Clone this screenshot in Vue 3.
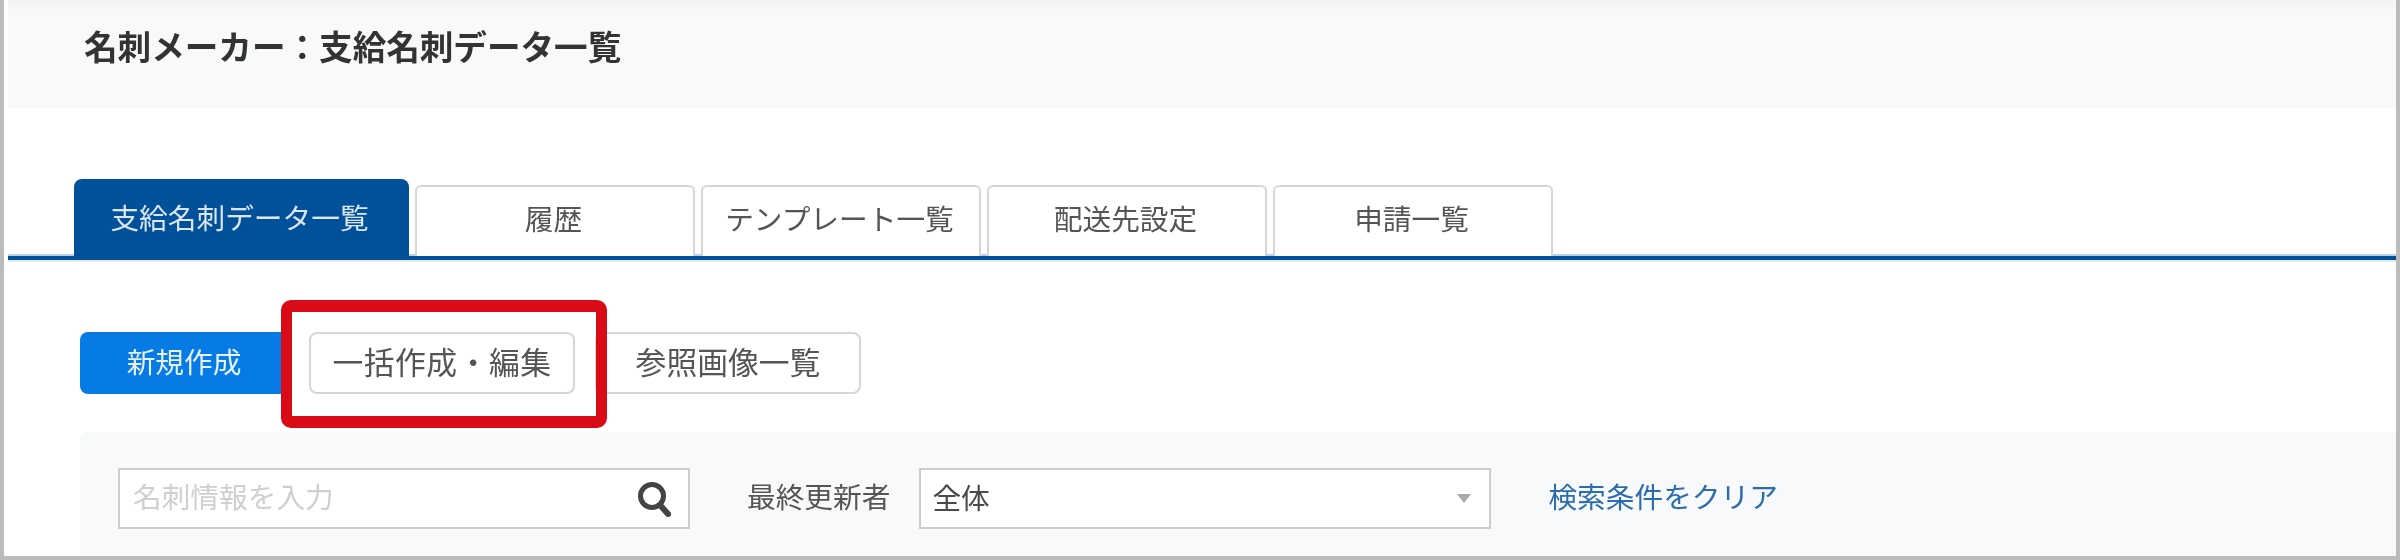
<script setup>
const tabs = ['支給名刺データ一覧', '履歴', 'テンプレート一覧', '配送先設定', '申請一覧']
</script>

<template>
  <div class="frame">
    <header class="head"><h1 class="title">名刺メーカー：支給名刺データ一覧</h1></header>
    <nav class="tabs">
      <a v-for="(t, i) in tabs" :key="t" class="tab" :class="{ active: i === 0 }">{{ t }}</a>
    </nav>
    <div class="rule"></div>
    <div class="toolbar">
      <button class="btn primary">新規作成</button>
      <button class="btn bulk">一括作成・編集</button>
      <button class="btn ref">参照画像一覧</button>
    </div>
    <section class="panel">
      <div class="field search">
        <span class="placeholder">名刺情報を入力</span>
        <svg class="icon" viewBox="0 0 34 36" width="34" height="36" aria-hidden="true">
          <circle cx="15" cy="15" r="11.5" fill="none" stroke="#444" stroke-width="5" />
          <path d="M23 24 L31 33" stroke="#444" stroke-width="6" stroke-linecap="round" fill="none" />
        </svg>
      </div>
      <span class="label">最終更新者</span>
      <div class="field select">
        <span>全体</span>
        <i class="arrow"></i>
      </div>
      <a class="link">検索条件をクリア</a>
    </section>
    <div class="callout"></div>
  </div>
</template>

<style scoped>
.frame {
  position: relative;
  width: 2400px;
  height: 560px;
  box-sizing: border-box;
  border: 4px solid #bbbbbb;
  border-top: 0;
  padding-left: 4px;
  background: #fff;
  overflow: hidden;
  font-family: "Noto Sans CJK JP", "Liberation Sans", sans-serif;
  color: #4a4a4a;
}
.head {
  height: 108px;
  box-sizing: border-box;
  padding: 22px 0 0 76px;
  background: linear-gradient(#f1f2f3, #f8f9fb 12px);
}
.title {
  margin: 0;
  font-size: 33.6px;
  line-height: 48px;
  font-weight: 700;
  color: #333;
  filter: blur(0.7px);
}
.tabs {
  display: flex;
  align-items: flex-end;
  gap: 6px;
  height: 77px;
  margin-top: 71px;
  padding-left: 66px;
}
.tab {
  width: 280px;
  height: 71px;
  box-sizing: border-box;
  border: 2px solid #d6d6d6;
  border-bottom: 0;
  border-radius: 6px 6px 0 0;
  padding-right: 3px;
  text-align: center;
  font-size: 28.7px;
  line-height: 62px;
  color: #555;
  background: #fff;
}
.tab.active {
  position: relative;
  z-index: 1;
  width: 335px;
  height: 77px;
  border: 0;
  border-radius: 8px 8px 0 0;
  padding-right: 4px;
  line-height: 76px;
  background: #00509a;
  color: #dbe6f2;
}
.rule {
  height: 4px;
  background: #00509a;
  box-shadow: 0 -2px 0 #bcd0e6, 0 2px 0 #e0e8f2;
}
.toolbar {
  display: flex;
  gap: 21px;
  margin-top: 72px;
  padding-left: 72px;
}
.btn {
  height: 62px;
  box-sizing: border-box;
  border: 2px solid #d6d6d6;
  border-radius: 8px;
  padding: 0 0 5px;
  background: #fff;
  font-family: inherit;
  font-size: 30.8px;
  color: #555;
  white-space: nowrap;
}
.primary {
  width: 208px;
  border: 0;
  background: #067be6;
  color: #e6f2fd;
  font-size: 28.7px;
}
.bulk {
  width: 266px;
  letter-spacing: 0.5px;
}
.ref {
  width: 266px;
  margin-left: -1px;
}
.panel {
  display: flex;
  align-items: flex-start;
  height: 124px;
  box-sizing: border-box;
  margin: 38px 0 0 72px;
  padding: 36px 0 0 38px;
  background: #f8f9fb;
  border-radius: 8px 0 0 0;
  font-size: 28.7px;
  line-height: 56px;
}
.field {
  display: flex;
  align-items: center;
  justify-content: space-between;
  width: 572px;
  height: 61px;
  box-sizing: border-box;
  border: 2px solid #cccccc;
  background: #fff;
}
.search {
  padding: 0 17px 0 13px;
}
.placeholder {
  padding-bottom: 5px;
  color: #cfcfcf;
}
.icon {
  display: block;
}
.label {
  margin: 0 29px 0 57px;
  color: #555;
}
.select {
  padding: 0 18px 0 11px;
}
.select span {
  padding-bottom: 4px;
}
.arrow {
  width: 0;
  height: 0;
  border: 7px solid transparent;
  border-top: 9px solid #aaa;
  border-bottom: 0;
}
.link {
  margin-left: 57px;
  color: #2a6cad;
}
.tab, .btn, .placeholder, .label, .select span, .link {
  filter: blur(0.7px);
}
.callout {
  position: absolute;
  left: 277px;
  top: 300px;
  width: 326px;
  height: 128px;
  box-sizing: border-box;
  border: 12px solid #d90b17;
  border-left-width: 11px;
  border-right-width: 11px;
  border-radius: 10px;
}
</style>
